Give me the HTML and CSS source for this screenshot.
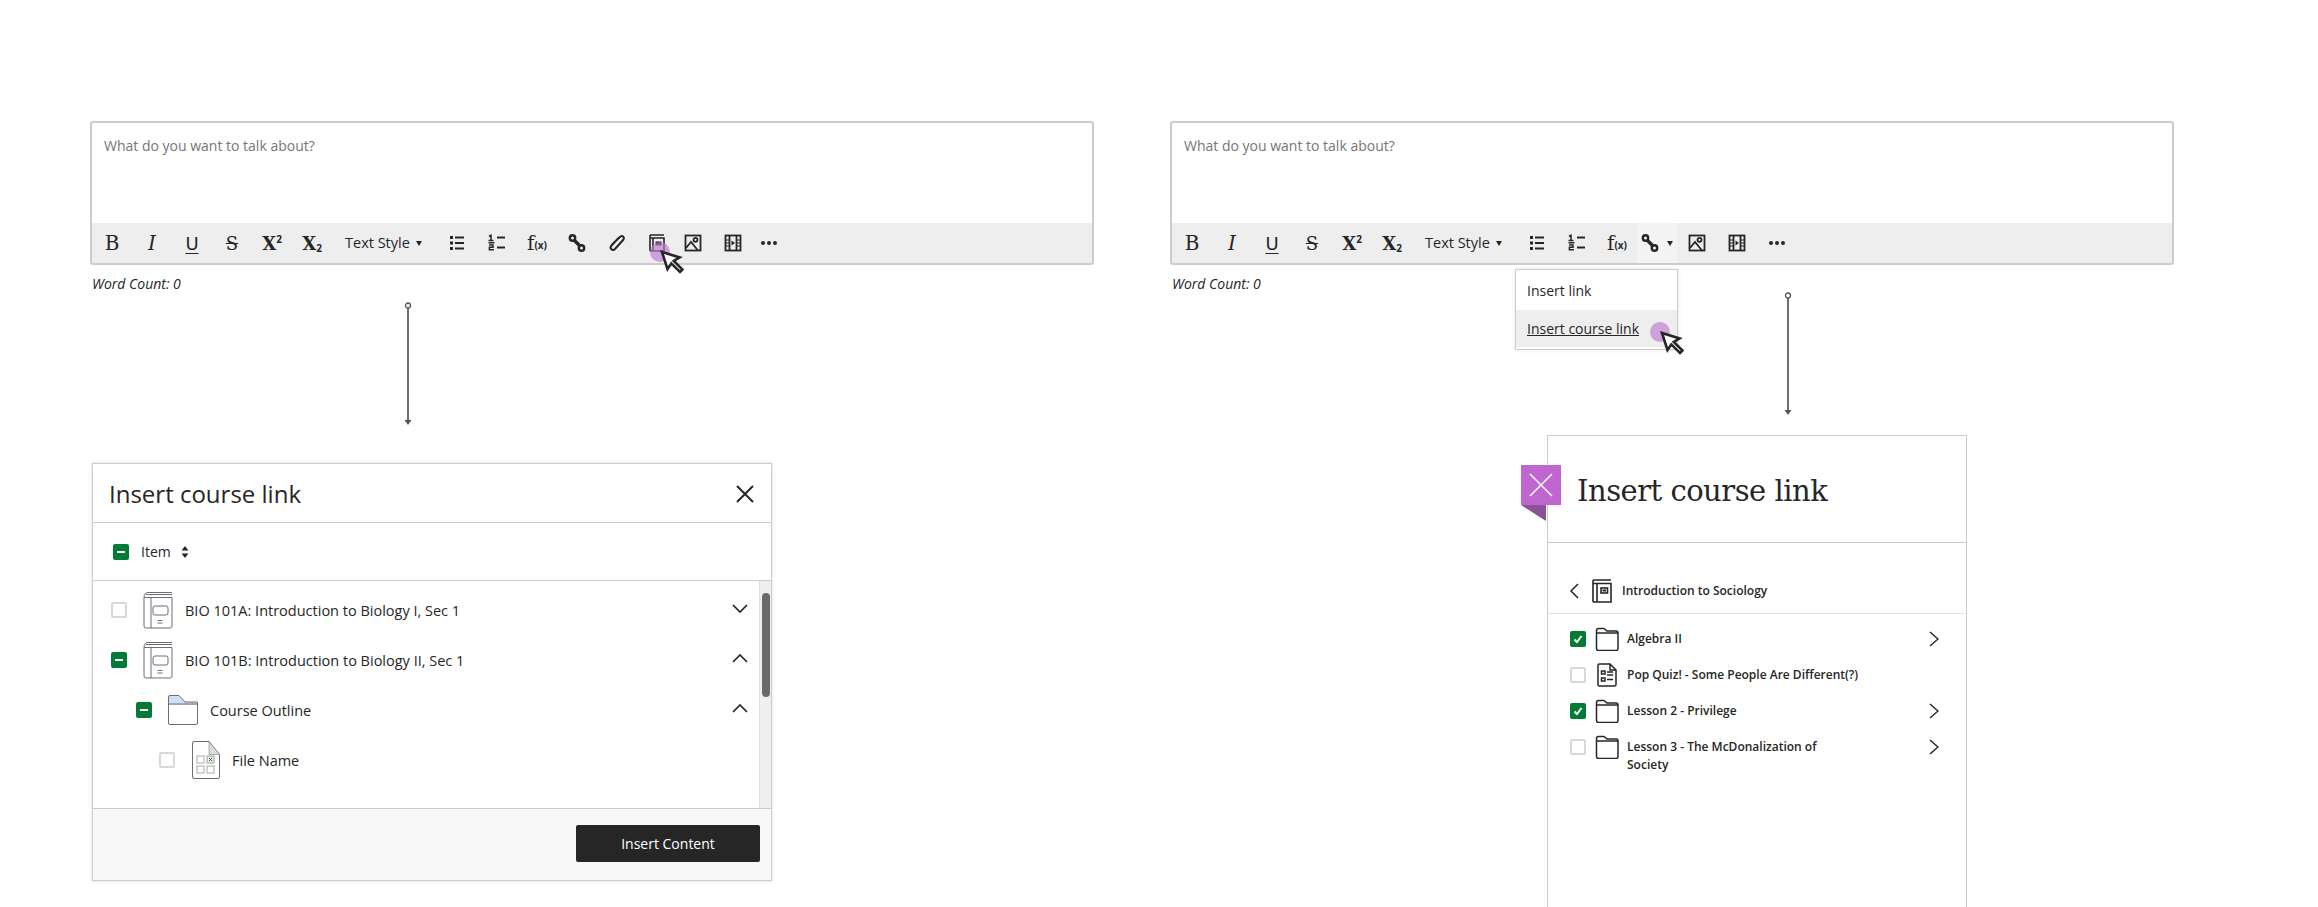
FILE: index.html
```html
<!DOCTYPE html>
<html lang="en">
<head>
    <meta charset="UTF-8">
    <title>Insert course link</title>
    <link rel="stylesheet" href="styles.css">
</head>
<body>
    <!-- Shared icons -->
    <svg class="icon-defs" aria-hidden="true">
        <symbol id="i-bullets" viewBox="0 0 20 20"><path d="M3 3h3v3H3zM3 8.5h3v3H3zM3 14h3v3H3z" fill="#262626"/><path d="M8 4.500h9M8 10h9M8 15.500h9" stroke="#262626" stroke-width="2" fill="none"/></symbol>
        <symbol id="i-numbers" viewBox="0 0 20 20"><path d="M2 3.500l2-1.200v5M1.500 7.500h5M1.500 9.700h6" stroke="#262626" stroke-width="1.500" fill="none"/><path d="M2 12h4v2.300H2.400v2.400H7" stroke="#262626" stroke-width="1.500" fill="none"/><path d="M10 4.500h8M10 14.500h8" stroke="#262626" stroke-width="2" fill="none"/></symbol>
        <symbol id="i-link" viewBox="0 0 20 20"><g fill="none" stroke="#262626" stroke-width="2.400"><circle cx="5.500" cy="5" r="2.700"/><circle cx="14.500" cy="15" r="2.700"/><path d="M7.500 7.500l5 5" stroke-width="3.400"/></g></symbol>
        <symbol id="i-clip" viewBox="0 0 20 20"><path d="M12 4.500l-7.500 8c-2.500 3 1 6 3.500 3.500l8.500-9.500c1.500-2-1-4.500-3-3L5.500 11" fill="none" stroke="#262626" stroke-width="2"/></symbol>
        <symbol id="i-book" viewBox="0 0 20 20"><g fill="none" stroke="#262626" stroke-width="1.600"><path d="M3 2h14M3 2v16M3 5h14v13H3M6 5v13"/></g><rect x="8.500" y="8.500" width="6" height="4" fill="#262626"/></symbol>
        <symbol id="i-book-tall" viewBox="0 0 20 24"><g fill="none" stroke="#262626" stroke-width="1.600"><path d="M1 1h18M1 1v22M1 4.500h18V23H1M5 4.500V23"/><rect x="9" y="9" width="6.500" height="5"/></g><rect x="10.500" y="10.500" width="3.500" height="2" fill="#262626"/></symbol>
        <symbol id="i-image" viewBox="0 0 20 20"><g fill="none" stroke="#262626" stroke-width="1.800"><rect x="2.500" y="2.500" width="15" height="15"/><circle cx="12.500" cy="6.800" r="2"/><path d="M3 15l5-6 7 8.500"/></g></symbol>
        <symbol id="i-film" viewBox="0 0 20 20"><g fill="none" stroke="#262626" stroke-width="1.800"><rect x="2.500" y="2.500" width="15" height="15"/><path d="M6.500 3v14M13.500 3v14"/><path d="M3 7h3M3 10h3M3 13h3M14 7h3M14 10h3M14 13h3" stroke-width="1.200"/></g><path d="M8.500 7.500l3.500 2.500-3.500 2.500z" fill="#262626"/></symbol>
        <symbol id="i-more" viewBox="0 0 20 20"><circle cx="4" cy="10" r="2" fill="#262626"/><circle cx="10" cy="10" r="2" fill="#262626"/><circle cx="16" cy="10" r="2" fill="#262626"/></symbol>
        <symbol id="i-cursor" viewBox="0 0 24 24"><path d="M2 2l5.500 17 3.800-5.600 8.700 8.600 2.500-2.500-8.700-8.600 5.800-3.500z" fill="#fff" stroke="#262626" stroke-width="2.600" stroke-linejoin="miter"/></symbol>
        <symbol id="i-course" viewBox="0 0 30 38"><g fill="#fff" stroke="#6f6c78" stroke-width="1"><path d="M1 6.500V35q0 2 2 2h24q2 0 2-2V6.500"/><path d="M1 6.500Q1 1.500 5 1.500h24M3 3.500h26M1 6.500h28M8 7v30"/><rect x="10" y="15" width="15" height="9" rx="2"/></g><path d="M14.500 29.500h5M14.500 32h5" stroke="#6f6c78" fill="none"/></symbol>
        <symbol id="i-folder-blue" viewBox="0 0 30 30"><path d="M.5 9V2q0-1.500 1.500-1.500h9l6 6.500h12.500v3H.5z" fill="#cfe0f5"/><path d="M.5 9V2q0-1.500 1.500-1.500h9l6 6.500h12q.5 0 .5 .500V28q0 1.500-1.500 1.500H2q-1.500 0-1.500-1.500V9h29" fill="none" stroke="#6f6c78"/></symbol>
        <symbol id="i-sheet" viewBox="0 0 28 38"><path d="M17 .5l10.500 13V36q0 1.500-1.500 1.500H2Q.5 37.500.5 36V2Q.5.500 2 .5z" fill="#fff" stroke="#6f6c78"/><path d="M17 .5l10.500 13H17z" fill="#dcdcdc" stroke="#6f6c78" stroke-width=".5"/><g fill="none" stroke="#aaa"><rect x="5" y="15" width="7" height="7"/><rect x="15" y="15" width="7" height="7" stroke="#8aa98f" fill="#e6efe7"/><rect x="5" y="25" width="7" height="7"/><rect x="15" y="25" width="7" height="7"/></g><path d="M17 17l3 3m0-3l-3 3" stroke="#555"/></symbol>
        <symbol id="i-folder" viewBox="0 0 24 24"><path d="M1.500 6V3.500q0-2 2-2h5.500l3 2.500h9q2 0 2 2v15.500q0 2-2 2H3.500q-2 0-2-2zM1.500 6h21" fill="none" stroke="#262626" stroke-width="1.500"/></symbol>
        <symbol id="i-quiz" viewBox="0 0 20 24"><path d="M13 1H2.500Q1 1 1 2.500v19Q1 23 2.500 23h15q1.500 0 1.500-1.500V7zV7h6" fill="none" stroke="#262626" stroke-width="1.500"/><path d="M4.500 8h3.500v3H4.500zM4.500 15h3.500v3H4.500z" fill="none" stroke="#262626" stroke-width="1.500"/><path d="M10 9h6M10 12h6M10 16.500h6" stroke="#262626" stroke-width="1.500"/></symbol>
    </svg>

    <main class="page">
        <!-- Toolbar button flow -->
        <section class="column column-left">
            <div class="editor">
                <div class="editor-text">What do you want to talk about?</div>
                <div class="toolbar">
                    <span class="tool glyph-b">B</span>
                    <span class="tool glyph-i">I</span>
                    <span class="tool glyph-u">U</span>
                    <span class="tool glyph-s">S</span>
                    <span class="tool glyph-x">X<sup>2</sup></span>
                    <span class="tool glyph-x">X<sub>2</sub></span>
                    <span class="tool-style">Text Style<i class="caret"></i></span>
                    <span class="tool"><svg class="ticon"><use href="#i-bullets"/></svg></span>
                    <span class="tool"><svg class="ticon"><use href="#i-numbers"/></svg></span>
                    <span class="tool glyph-f">f<small>(x)</small></span>
                    <span class="tool"><svg class="ticon"><use href="#i-link"/></svg></span>
                    <span class="tool"><svg class="ticon"><use href="#i-clip"/></svg></span>
                    <span class="tool"><svg class="ticon"><use href="#i-book"/></svg></span>
                    <span class="tool tool-tight"><svg class="ticon"><use href="#i-image"/></svg></span>
                    <span class="tool"><svg class="ticon"><use href="#i-film"/></svg></span>
                    <span class="tool tool-more"><svg class="ticon"><use href="#i-more"/></svg></span>
                </div>
            </div>
            <div class="word-count">Word Count: 0</div>

            <svg class="connector connector-left" viewBox="0 0 10 123"><circle cx="5" cy="3.500" r="2.500" fill="none" stroke="#555" stroke-width="1.300"/><path d="M5 6v112" stroke="#555" stroke-width="1.700"/><path d="M1.500 118h7L5 123z" fill="#555"/></svg>

            <div class="picker">
                <div class="picker-head">
                    <h2>Insert course link</h2>
                    <svg class="close" viewBox="0 0 18 18"><path d="M1 1l16 16M17 1L1 17" stroke="#262626" stroke-width="2"/></svg>
                </div>
                <div class="picker-sort">
                    <span class="check check-mixed"></span>
                    <span>Item</span>
                    <svg class="sort" viewBox="0 0 8 12"><path d="M4 0l3.500 4.500h-7zM4 12L.5 7.500h7z" fill="#262626"/></svg>
                </div>
                <div class="picker-body">
                    <div class="picker-list">
                        <div class="row">
                            <span class="check"></span>
                            <svg class="row-icon"><use href="#i-course"/></svg>
                            <span class="row-name">BIO 101A: Introduction to Biology I, Sec 1</span>
                            <svg class="chev" viewBox="0 0 16 9"><path d="M1 1l7 7 7-7" fill="none" stroke="#262626" stroke-width="1.700"/></svg>
                        </div>
                        <div class="row">
                            <span class="check check-mixed"></span>
                            <svg class="row-icon"><use href="#i-course"/></svg>
                            <span class="row-name">BIO 101B: Introduction to Biology II, Sec 1</span>
                            <svg class="chev" viewBox="0 0 16 9"><path d="M1 8l7-7 7 7" fill="none" stroke="#262626" stroke-width="1.700"/></svg>
                        </div>
                        <div class="row row-sub">
                            <span class="check check-mixed"></span>
                            <svg class="row-icon"><use href="#i-folder-blue"/></svg>
                            <span class="row-name">Course Outline</span>
                            <svg class="chev" viewBox="0 0 16 9"><path d="M1 8l7-7 7 7" fill="none" stroke="#262626" stroke-width="1.700"/></svg>
                        </div>
                        <div class="row row-sub2">
                            <span class="check"></span>
                            <svg class="row-icon row-icon-sheet"><use href="#i-sheet"/></svg>
                            <span class="row-name">File Name</span>
                        </div>
                    </div>
                    <div class="scrollbar"><div class="thumb"></div></div>
                </div>
                <div class="picker-foot">
                    <button class="insert-btn">Insert Content</button>
                </div>
            </div>

            <span class="touch touch-left"></span>
            <svg class="cursor cursor-left"><use href="#i-cursor"/></svg>
        </section>

        <!-- Link menu flow -->
        <section class="column column-right">
            <div class="editor">
                <div class="editor-text">What do you want to talk about?</div>
                <div class="toolbar">
                    <span class="tool glyph-b">B</span>
                    <span class="tool glyph-i">I</span>
                    <span class="tool glyph-u">U</span>
                    <span class="tool glyph-s">S</span>
                    <span class="tool glyph-x">X<sup>2</sup></span>
                    <span class="tool glyph-x">X<sub>2</sub></span>
                    <span class="tool-style">Text Style<i class="caret"></i></span>
                    <span class="tool"><svg class="ticon"><use href="#i-bullets"/></svg></span>
                    <span class="tool"><svg class="ticon"><use href="#i-numbers"/></svg></span>
                    <span class="tool glyph-f">f<small>(x)</small></span>
                    <span class="tool tool-open"><svg class="ticon"><use href="#i-link"/></svg><i class="caret"></i></span>
                    <span class="tool"><svg class="ticon"><use href="#i-image"/></svg></span>
                    <span class="tool"><svg class="ticon"><use href="#i-film"/></svg></span>
                    <span class="tool"><svg class="ticon"><use href="#i-more"/></svg></span>
                </div>
            </div>
            <div class="word-count">Word Count: 0</div>

            <svg class="connector connector-right" viewBox="0 0 10 123"><circle cx="5" cy="3.500" r="2.500" fill="none" stroke="#555" stroke-width="1.300"/><path d="M5 6v112" stroke="#555" stroke-width="1.700"/><path d="M1.500 118h7L5 123z" fill="#555"/></svg>

            <div class="link-panel">
                <div class="link-head">
                    <h2>Insert course link</h2>
                </div>
                <div class="crumb">
                    <svg class="crumb-back" viewBox="0 0 10 16"><path d="M9 1L2 8l7 7" fill="none" stroke="#262626" stroke-width="1.500"/></svg>
                    <svg class="crumb-icon"><use href="#i-book-tall"/></svg>
                    <span>Introduction to Sociology</span>
                </div>
                <div class="link-list">
                    <div class="link-row">
                        <span class="check check-on"><svg viewBox="0 0 16 16"><path d="M4.500 8.500l2.500 2.500 4.500-6" fill="none" stroke="#fff" stroke-width="2"/></svg></span>
                        <svg class="link-icon"><use href="#i-folder"/></svg>
                        <span class="link-name">Algebra II</span>
                        <svg class="chev-right" viewBox="0 0 10 16"><path d="M1 1l8 7-8 7" fill="none" stroke="#262626" stroke-width="1.500"/></svg>
                    </div>
                    <div class="link-row">
                        <span class="check"></span>
                        <svg class="link-icon"><use href="#i-quiz"/></svg>
                        <span class="link-name">Pop Quiz! - Some People Are Different(?)</span>
                    </div>
                    <div class="link-row">
                        <span class="check check-on"><svg viewBox="0 0 16 16"><path d="M4.500 8.500l2.500 2.500 4.500-6" fill="none" stroke="#fff" stroke-width="2"/></svg></span>
                        <svg class="link-icon"><use href="#i-folder"/></svg>
                        <span class="link-name">Lesson 2 - Privilege</span>
                        <svg class="chev-right" viewBox="0 0 10 16"><path d="M1 1l8 7-8 7" fill="none" stroke="#262626" stroke-width="1.500"/></svg>
                    </div>
                    <div class="link-row">
                        <span class="check"></span>
                        <svg class="link-icon"><use href="#i-folder"/></svg>
                        <span class="link-name"><span class="link-wrap">Lesson 3 - The McDonalization of Society</span></span>
                        <svg class="chev-right" viewBox="0 0 10 16"><path d="M1 1l8 7-8 7" fill="none" stroke="#262626" stroke-width="1.500"/></svg>
                    </div>
                </div>
            </div>

            <!-- Overlays -->
            <div class="menu">
                <div class="menu-item">Insert link</div>
                <div class="menu-item menu-item-hover">Insert course link</div>
            </div>
            <svg class="ribbon" viewBox="0 0 40 56"><rect width="40" height="40" fill="#c066d0"/><path d="M0 40h25v16z" fill="#8b5199"/><path d="M9 9l22 22M31 9L9 31" stroke="#fff" stroke-width="1.500"/></svg>
            <span class="touch touch-right"></span>
            <svg class="cursor cursor-right"><use href="#i-cursor"/></svg>
        </section>
    </main>
</body>
</html>
```

FILE: styles.css
```css
/* Reset */
* {
    margin: 0;
    padding: 0;
    box-sizing: border-box;
}

body {
    font-family: "Open Sans", Arial, sans-serif;
    font-size: 14px;
    color: #262626;
    background: #fff;
    height: 907px;
    overflow: hidden;
}

.icon-defs {
    width: 0;
    height: 0;
    display: block;
}

.page {
    display: flex;
    gap: 76px;
    padding: 121px 0 0 90px;
}

.column {
    position: relative;
    width: 1004px;
    flex: none;
}

/* Editor */
.editor {
    border: 2px solid #ccc;
    border-radius: 3px;
    height: 144px;
}

.editor-text {
    height: 100px;
    padding: 13px 12px;
    line-height: 20px;
    color: #767676;
}

.toolbar {
    display: flex;
    height: 40px;
    background: #eee;
}

.tool {
    width: 40px;
    height: 40px;
    flex: none;
    display: flex;
    align-items: center;
    justify-content: center;
}

.tool-tight {
    margin-left: -4px;
}

.tool-more {
    width: 32px;
}

.tool-open {
    gap: 7px;
    justify-content: flex-start;
    padding-left: 3px;
    background: #f4f4f4;
}

.ticon {
    width: 20px;
    height: 20px;
}

.tool-style {
    width: 105px;
    padding-left: 13px;
    line-height: 40px;
    font-size: 14.500px;
    flex: none;
}

.caret {
    display: inline-block;
    margin-left: 6px;
    vertical-align: 2px;
    border-left: 3.5px solid transparent;
    border-right: 3.5px solid transparent;
    border-top: 5px solid #262626;
}

.tool-open .caret {
    margin-left: 0;
}

.glyph-b,
.glyph-i {
    font-family: "DejaVu Serif", serif;
    font-size: 20px;
}

.glyph-i {
    font-style: italic;
}

.glyph-u {
    font-family: "DejaVu Sans", sans-serif;
    font-size: 18px;
    text-decoration: underline;
    text-underline-offset: 3px;
}

.glyph-s {
    font-family: "DejaVu Serif", serif;
    font-size: 18px;
    text-decoration: line-through;
}

.glyph-x {
    font-family: "DejaVu Serif", serif;
    font-size: 18px;
    font-weight: bold;
}

.glyph-x sup,
.glyph-x sub {
    font-family: "Open Sans", sans-serif;
    font-size: 10px;
    font-weight: bold;
    line-height: 1;
}

.glyph-x sup {
    margin-top: -9px;
}

.glyph-x sub {
    margin-top: 10px;
}

.glyph-f {
    font-family: "DejaVu Serif", serif;
    font-size: 20px;
}

.glyph-f small {
    font-family: "Open Sans", sans-serif;
    font-size: 10px;
    font-weight: bold;
    margin-top: 4px;
}

.word-count {
    margin: 9px 0 0 2px;
    line-height: 20px;
    font-size: 14px;
    font-style: italic;
}

/* Arrows between steps */
.connector {
    display: block;
    width: 10px;
    height: 123px;
}

.connector-left {
    margin: 8px 0 38px 313px;
}

.connector-right {
    margin: -2px 0 20px 613px;
}

/* Insert course link picker */
.picker {
    width: 680px;
    height: 418px;
    margin-left: 2px;
    border: 1px solid #ccc;
    box-shadow: 0 0 4px rgba(0, 0, 0, 0.12);
    display: flex;
    flex-direction: column;
}

.picker-head {
    height: 59px;
    flex: none;
    display: flex;
    align-items: center;
    justify-content: space-between;
    padding: 1px 17px 0 16px;
    border-bottom: 1px solid #ccc;
}

.picker-head h2 {
    font-size: 24px;
    font-weight: 400;
}

.close {
    width: 18px;
    height: 18px;
}

.picker-sort {
    height: 58px;
    flex: none;
    display: flex;
    align-items: center;
    gap: 12px;
    padding-left: 20px;
    border-bottom: 1px solid #ccc;
}

.sort {
    width: 8px;
    height: 12px;
    margin-left: -2px;
}

.check {
    width: 16px;
    height: 16px;
    flex: none;
    display: block;
    border: 2px solid #d8d8d8;
    border-radius: 2px;
    background: #fff;
}

.check-mixed {
    background: #037b35;
    border-color: #037b35;
}

.check-mixed::after {
    content: "";
    display: block;
    width: 8px;
    height: 2px;
    margin: 5px auto 0;
    background: #fff;
}

.check-on {
    background: #037b35;
    border: none;
}

.check-on svg {
    display: block;
    width: 16px;
    height: 16px;
}

.picker-body {
    flex: 1;
    display: flex;
    min-height: 0;
}

.picker-list {
    flex: 1;
    padding: 4px 11px 0 18px;
}

.row {
    height: 50px;
    display: flex;
    align-items: center;
    gap: 16px;
}

.row-sub {
    padding-left: 25px;
}

.row-sub2 {
    padding-left: 48px;
}

.row-icon {
    width: 30px;
    height: 38px;
    flex: none;
    margin-right: -4px;
}

.row-icon-sheet {
    width: 28px;
    margin-left: 1px;
}

.row-name {
    flex: 1;
    font-size: 14.500px;
}

.chev {
    width: 16px;
    height: 9px;
    flex: none;
    margin-top: -4px;
}

.scrollbar {
    width: 12px;
    flex: none;
    border-left: 1px solid #ddd;
    background: #efefef;
    padding: 12px 1px 0 2px;
}

.thumb {
    height: 104px;
    border-radius: 4px;
    background: #6a6a6a;
}

.picker-foot {
    height: 72px;
    flex: none;
    display: flex;
    justify-content: flex-end;
    padding: 16px 11px 0 0;
    background: #f8f8f8;
    border-top: 1px solid #ccc;
}

.insert-btn {
    width: 184px;
    height: 37px;
    border: none;
    border-radius: 2px;
    background: #262626;
    color: #fff;
    font: 14px "Open Sans", sans-serif;
}

/* Insert course link panel */
.link-panel {
    width: 420px;
    height: 480px;
    margin-left: 377px;
    border: 1px solid #ccc;
    border-bottom: none;
}

.link-head {
    height: 107px;
    padding: 3px 0 0 29px;
    display: flex;
    align-items: center;
    border-bottom: 1px solid #ccc;
}

.link-head h2 {
    font-family: "DejaVu Serif", serif;
    font-size: 29px;
    font-weight: 400;
    letter-spacing: -0.5px;
}

.crumb {
    height: 71px;
    padding: 25px 0 0 21px;
    display: flex;
    align-items: center;
    border-bottom: 1px solid #e5e5e5;
    font-size: 12px;
    font-weight: 600;
}

.crumb-back {
    width: 10px;
    height: 16px;
    margin-right: 13px;
}

.crumb-icon {
    width: 20px;
    height: 24px;
    margin-right: 10px;
}

.link-list {
    padding: 8px 27px 0 22px;
}

.link-row {
    min-height: 36px;
    display: flex;
    align-items: flex-start;
    gap: 8px;
    padding-top: 9px;
    font-size: 12px;
    font-weight: 600;
}

.link-icon {
    width: 24px;
    height: 24px;
    flex: none;
    margin-top: -4px;
    margin-left: 1px;
}

.link-name {
    flex: 1;
    line-height: 18px;
    margin-top: -1px;
}

.link-wrap {
    display: block;
    max-width: 215px;
}

.chev-right {
    width: 10px;
    height: 16px;
    flex: none;
}

/* Link menu and pointers */
.menu {
    position: absolute;
    left: 345px;
    top: 148px;
    width: 163px;
    height: 81px;
    background: #fff;
    border: 1px solid #ccc;
    box-shadow: 0 0 4px rgba(0, 0, 0, 0.1);
    padding-top: 1px;
}

.menu-item {
    height: 39px;
    padding: 0 11px;
    line-height: 39px;
    font-size: 14px;
}

.menu-item-hover {
    height: 37px;
    line-height: 37px;
    background: #eee;
    text-decoration: underline;
}

.ribbon {
    position: absolute;
    left: 351px;
    top: 344px;
    width: 40px;
    height: 56px;
}

.touch {
    position: absolute;
    width: 20px;
    height: 20px;
    border-radius: 50%;
    background: #bd78cc;
    opacity: 0.65;
}

.touch-left {
    left: 560px;
    top: 121px;
}

.touch-right {
    left: 480px;
    top: 201px;
}

.cursor {
    position: absolute;
    width: 24px;
    height: 24px;
}

.cursor-left {
    left: 570px;
    top: 129px;
}

.cursor-right {
    left: 490px;
    top: 210px;
}
```
